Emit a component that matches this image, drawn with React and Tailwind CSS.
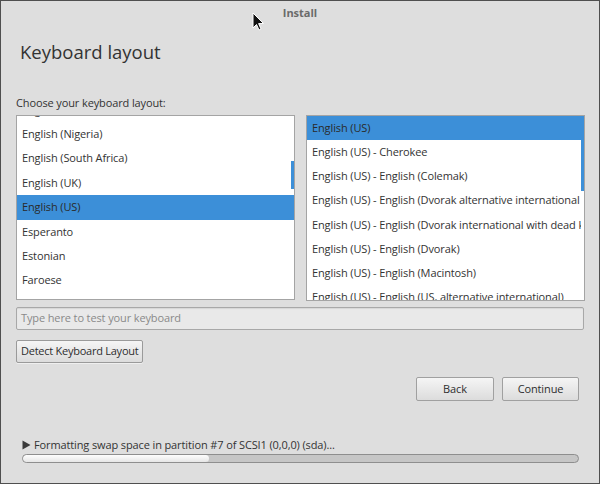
const leftRows = [
  'English (New Zealand)',
  'English (Nigeria)',
  'English (South Africa)',
  'English (UK)',
  'English (US)',
  'Esperanto',
  'Estonian',
  'Faroese',
  'Filipino',
];

const rightRows = [
  'English (US)',
  'English (US) - Cherokee',
  'English (US) - English (Colemak)',
  'English (US) - English (Dvorak alternative international no dead keys)',
  'English (US) - English (Dvorak international with dead keys)',
  'English (US) - English (Dvorak)',
  'English (US) - English (Macintosh)',
  'English (US) - English (US, alternative international)',
];

const Cursor = () => (
  <svg className="absolute left-[251px] top-[11px]" width="14" height="20" viewBox="0 0 14 20">
    <path d="M1 1 L1 16 L4.5 12.5 L7 18 L9 17 L6.6 11.6 L11.5 11.5 Z" fill="#111" stroke="#fff" strokeWidth="1" strokeLinejoin="round" />
  </svg>
);

const App = () => {
  return (
    <div
      className="relative w-[600px] h-[484px] bg-[#dedede] border border-[#4f4f4f] flex flex-col text-[#333] overflow-hidden tracking-[-0.12px]"
      style={{ fontFamily: '"Open Sans", "Noto Sans", sans-serif' }}
    >
      <Cursor />
      <div className="h-[25px] flex items-center justify-center text-[11px] font-bold text-[#6a6a6a] tracking-normal">
        Install
      </div>

      <div className="mt-[12px] pl-[19px] text-[18.5px] leading-[28px] text-[#333] tracking-normal">
        Keyboard layout
      </div>

      <div className="mt-[30px] pl-[15px] text-[11px] leading-[14px]">
        Choose your keyboard layout:
      </div>

      <div className="mt-[5px] pl-[15px] flex gap-[11px]">
        {/* left list */}
        <div className="relative w-[279px] h-[185px] bg-white border border-[#a4a4a4] overflow-hidden">
          <div className="mt-[-18.4px]">
            {leftRows.map((row) => (
              <div
                key={row}
                className={`h-[24.4px] flex items-center pl-[5px] text-[11px] whitespace-nowrap ${
                  row === 'English (US)' ? 'bg-[#3c8fd8] text-[#2a2a2a]' : ''
                }`}
              >
                {row}
              </div>
            ))}
          </div>
          <div className="absolute right-0 top-[45px] w-[3px] h-[28px] bg-[#3c8fd8]" />
        </div>

        {/* right list */}
        <div className="relative w-[279px] h-[186px] bg-white border border-[#a4a4a4] overflow-hidden">
          <div className="pr-[3px]">
            {rightRows.map((row, i) => (
              <div
                key={row}
                className={`h-[24.2px] flex items-center pl-[5px] text-[11px] whitespace-nowrap overflow-hidden ${
                  i === 0 ? 'bg-[#3c8fd8] text-[#2a2a2a] mr-[-3px]' : ''
                }`}
              >
                {row}
              </div>
            ))}
          </div>
          <div className="absolute right-0 top-0 w-[3px] h-[75px] bg-[#3c8fd8]" />
        </div>
      </div>

      <div className="mt-[6px] ml-[15px] w-[568px] h-[23px] rounded-[2px] border border-[#a8a8a8] bg-[#e9e9e9] shadow-[inset_0_1px_1px_rgba(0,0,0,0.08)] flex items-center pl-[4px] text-[11px] text-[#8a8a8a]">
        Type here to test your keyboard
      </div>

      <div className="mt-[7px] ml-[15px]">
        <button className="h-[23px] px-[4px] rounded-[2px] border border-[#9a9a9a] bg-gradient-to-b from-[#f5f5f5] to-[#dcdcdc] text-[11px] text-[#2e2e2e] tracking-[-0.25px] shadow-[0_1px_0_rgba(255,255,255,0.5)]">
          Detect Keyboard Layout
        </button>
      </div>

      <div className="mt-[14px] pr-[20px] flex justify-end gap-[8px]">
        <button className="w-[78px] h-[24px] rounded-[2px] border border-[#a0a0a0] bg-gradient-to-b from-[#f5f5f5] to-[#dcdcdc] text-[11px] text-[#2e2e2e]">
          Back
        </button>
        <button className="w-[77px] h-[24px] rounded-[2px] border border-[#a0a0a0] bg-gradient-to-b from-[#f5f5f5] to-[#dcdcdc] text-[11px] text-[#2e2e2e]">
          Continue
        </button>
      </div>

      <div className="flex-1" />

      <div className="pl-[21px] pr-[20px] pb-[20px]">
        <div className="flex items-center gap-[3px] text-[11px] leading-[14px] text-[#333]">
          <svg width="9" height="10" viewBox="0 0 9 10">
            <path d="M0.5 0.5 L8.5 5 L0.5 9.5 Z" fill="#3a3a3a" />
          </svg>
          Formatting swap space in partition #7 of SCSI1 (0,0,0) (sda)...
        </div>
        <div className="mt-[2px] h-[9px] rounded-full border border-[#8e8e8e] bg-[#c6c6c6] overflow-hidden">
          <div className="h-full w-[186px] rounded-full bg-gradient-to-b from-[#fdfdfd] to-[#e6e6e6]" />
        </div>
      </div>
    </div>
  );
};

export default App;
